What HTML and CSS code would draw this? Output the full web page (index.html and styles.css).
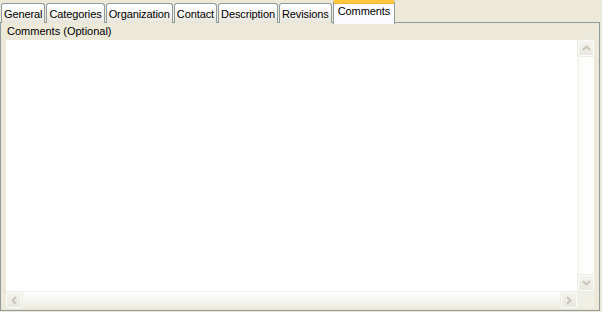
FILE: index.html
```html
<!DOCTYPE html>
<html lang="en">
<head>
  <meta charset="UTF-8">
  <title>Comments</title>
  <link rel="stylesheet" href="styles.css">
</head>
<body>

  <div class="tabs">
    <div class="tab">General</div>
    <div class="tab">Categories</div>
    <div class="tab">Organization</div>
    <div class="tab">Contact</div>
    <div class="tab">Description</div>
    <div class="tab">Revisions</div>
    <div class="tab active">Comments</div>
  </div>

  <div class="panel">
    <div class="field-label">Comments (Optional)</div>
    <div class="memo">
      <div class="memo-text"></div>
      <div class="vscroll">
        <div class="sb-btn">
          <svg width="9" height="6" viewBox="0 0 9 6"><path d="M1 5 L4.5 1.5 L8 5" fill="none" stroke="#c8c6b9" stroke-width="2"/></svg>
        </div>
        <div class="sb-track-v"></div>
        <div class="sb-btn">
          <svg width="9" height="6" viewBox="0 0 9 6"><path d="M1 1 L4.5 4.5 L8 1" fill="none" stroke="#c8c6b9" stroke-width="2"/></svg>
        </div>
      </div>
      <div class="hscroll">
        <div class="sb-btn">
          <svg width="6" height="9" viewBox="0 0 6 9"><path d="M5 1 L1.5 4.5 L5 8" fill="none" stroke="#c8c6b9" stroke-width="2"/></svg>
        </div>
        <div class="sb-track-h"></div>
        <div class="sb-btn">
          <svg width="6" height="9" viewBox="0 0 6 9"><path d="M1 1 L4.5 4.5 L1 8" fill="none" stroke="#c8c6b9" stroke-width="2"/></svg>
        </div>
      </div>
      <div class="sb-corner"></div>
    </div>
  </div>

</body>
</html>
```

FILE: styles.css
```css
body {
  margin: 0;
  background: #ece9d8;
  font-family: 'Liberation Sans', Arial, sans-serif;
  font-size: 11px;
  color: #000;
}

.tabs {
  display: flex;
  align-items: flex-end;
  gap: 1px;
  height: 23px;
  padding-left: 1px;
  position: relative;
  z-index: 1;
}

.tab {
  height: 20px;
  line-height: 20px;
  padding: 0 2px;
  border: 1px solid #919b9c;
  border-bottom: none;
  border-radius: 3px 3px 0 0;
  background: linear-gradient(#ffffff, #f3f2ec 60%, #e6e4da);
  box-sizing: border-box;
  letter-spacing: -0.1px;
}

.tab.active {
  height: 24px;
  line-height: 17px;
  padding: 0 4px;
  margin-bottom: -1px;
  border-top: 3px solid #ffc83c;
  border-radius: 2px 2px 0 0;
  background: #fcfcfe;
  box-shadow: inset 0 1px 0 #f5b53a;
}

.panel {
  width: 600px;
  height: 289px;
  box-sizing: border-box;
  border: 1px solid #919b9c;
  margin-top: -1px;
  padding: 0 5px;
}

.field-label {
  height: 17px;
  line-height: 17px;
  padding-left: 1px;
}

.memo {
  width: 588px;
  height: 268px;
  background: #fff;
  display: grid;
  grid-template-columns: 1fr 17px;
  grid-template-rows: 1fr 17px;
}

.vscroll {
  display: flex;
  flex-direction: column;
  background: linear-gradient(to right, #f8f8f4, #fefefe 40%, #fcfcf9);
  border-left: 1px solid #f1f0ea;
}

.hscroll {
  display: flex;
  background: linear-gradient(#fefefe, #f3f2ec 70%, #ebeae3);
  border-top: 1px solid #f1f0ea;
}

.sb-track-v,
.sb-track-h {
  flex: 1;
}

.sb-btn {
  width: 16px;
  height: 16px;
  box-sizing: border-box;
  border: 1px solid #fbfbf9;
  border-radius: 2px;
  background: linear-gradient(#f4f3ee, #e9e8e0);
  box-shadow: 0 0 0 1px #ecebe4;
  display: flex;
  align-items: center;
  justify-content: center;
}

.sb-corner {
  background: #f0efe6;
}
```
